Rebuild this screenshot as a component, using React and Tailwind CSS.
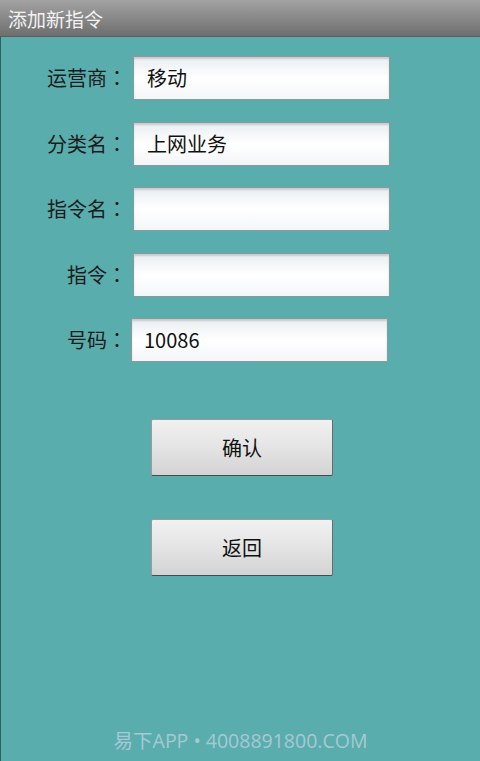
const rows = [
  { label: "运营商", value: "移动" },
  { label: "分类名", value: "上网业务" },
  { label: "指令名", value: "" },
  { label: "指令", value: "" },
  { label: "号码", value: "10086", shift: true },
];

const cjk = { fontFamily: '"Noto Sans CJK SC", "Noto Sans", sans-serif' };
const colon = { fontFamily: '"Noto Sans CJK TC", sans-serif' };

export default function App() {
  return (
    <div className="w-[480px] h-[761px] flex flex-col bg-[#5aadad] overflow-hidden" style={cjk}>
      <div className="h-[37px] shrink-0 flex items-center px-2 bg-gradient-to-b from-[#a3a3a3] to-[#6e6e6e] border-b border-[#5c5c5c]">
        <span className="text-[19px] text-[#f2f2f2] leading-none">添加新指令</span>
      </div>

      <div className="flex-1 flex flex-col border-l border-[#2f5f5f]">
        <div className="flex flex-col gap-[21.5px] pt-[19px]">
          {rows.map((r) => (
            <div key={r.label} className="flex items-center">
              <label className="w-[127px] text-right text-[20px] text-[#1c1c1c] leading-none pr-[1px]">
                {r.label}
                <span style={colon}>：</span>
              </label>
              <div
                className={
                  "w-[257px] h-[44px] flex items-center text-[20px] text-[#111] bg-gradient-to-b from-[#e9eef2] via-white to-[#f3f6f8] border border-[#8a9a9a] shadow-[inset_0_2px_2px_rgba(0,0,0,0.15)] " +
                  (r.shift ? "ml-[3px] pl-[12px]" : "ml-[5px] pl-[13px]")
                }
              >
                {r.value}
              </div>
            </div>
          ))}
        </div>

        <div className="flex flex-col items-center gap-[43px] mt-[57px] pl-[3px]">
          <button className="w-[182px] h-[57px] text-[20px] text-[#111] bg-gradient-to-b from-[#f1f1f1] via-[#e4e4e4] to-[#d3d3d3] border border-[#9a9a9a] border-b-[#4a4a4a] border-r-[#6a6a6a] rounded-[2px]">
            确认
          </button>
          <button className="w-[182px] h-[57px] text-[20px] text-[#111] bg-gradient-to-b from-[#f1f1f1] via-[#e4e4e4] to-[#d3d3d3] border border-[#9a9a9a] border-b-[#4a4a4a] border-r-[#6a6a6a] rounded-[2px]">
            返回
          </button>
        </div>

        <div className="mt-auto pb-[11px] flex justify-center">
          <span
            className="text-[19.5px] text-[#a6c9d3] leading-none"
            style={{ fontFamily: '"Open Sans", "Noto Sans CJK SC", sans-serif' }}
          >
            易下APP • 4008891800.COM
          </span>
        </div>
      </div>
    </div>
  );
}
